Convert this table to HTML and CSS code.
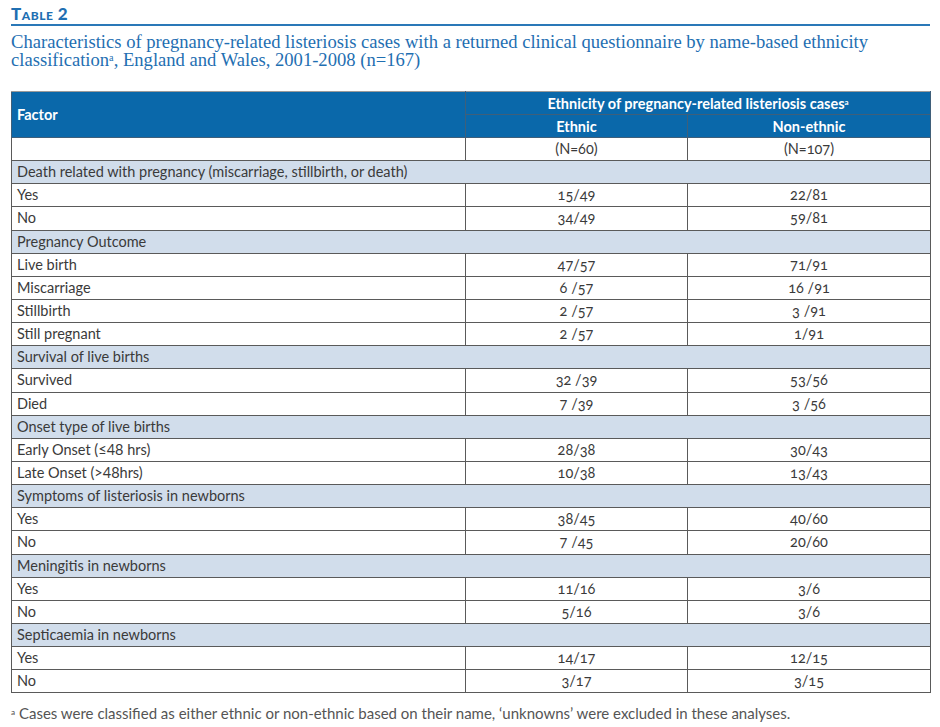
FILE: index.html
```html
<!DOCTYPE html>
<html lang="en">
<head>
<meta charset="utf-8">
<title>Table 2</title>
<link rel="stylesheet" href="styles.css">
</head>
<body>
<div class="page">
  <h1 class="label">Table 2</h1>
  <p class="caption">Characteristics of pregnancy-related listeriosis cases with a returned clinical questionnaire by name-based ethnicity classification<sup>a</sup>, England and Wales, 2001-2008 (n=167)</p>
  <table class="data">
    <colgroup>
      <col class="c1"><col class="c2"><col class="c3">
    </colgroup>
    <thead>
      <tr>
        <th rowspan="2" class="left">Factor</th>
        <th colspan="2">Ethnicity of pregnancy-related listeriosis cases<sup>a</sup></th>
      </tr>
      <tr>
        <th>Ethnic</th>
        <th>Non-ethnic</th>
      </tr>
    </thead>
    <tbody>
      <tr><td></td><td class="n">(N=60)</td><td class="n">(N=107)</td></tr>
      <tr class="sec"><td colspan="3">Death related with pregnancy (miscarriage, stillbirth, or death)</td></tr>
      <tr><td>Yes</td><td class="n">15/49</td><td class="n">22/81</td></tr>
      <tr><td>No</td><td class="n">34/49</td><td class="n">59/81</td></tr>
      <tr class="sec"><td colspan="3">Pregnancy Outcome</td></tr>
      <tr><td>Live birth</td><td class="n">47/57</td><td class="n">71/91</td></tr>
      <tr><td>Miscarriage</td><td class="n">6 /57</td><td class="n">16 /91</td></tr>
      <tr><td>Stillbirth</td><td class="n">2 /57</td><td class="n">3 /91</td></tr>
      <tr><td>Still pregnant</td><td class="n">2 /57</td><td class="n">1/91</td></tr>
      <tr class="sec"><td colspan="3">Survival of live births</td></tr>
      <tr><td>Survived</td><td class="n">32 /39</td><td class="n">53/56</td></tr>
      <tr><td>Died</td><td class="n">7 /39</td><td class="n">3 /56</td></tr>
      <tr class="sec"><td colspan="3">Onset type of live births</td></tr>
      <tr><td>Early Onset (≤48 hrs)</td><td class="n">28/38</td><td class="n">30/43</td></tr>
      <tr><td>Late Onset (&gt;48hrs)</td><td class="n">10/38</td><td class="n">13/43</td></tr>
      <tr class="sec"><td colspan="3">Symptoms of listeriosis in newborns</td></tr>
      <tr><td>Yes</td><td class="n">38/45</td><td class="n">40/60</td></tr>
      <tr><td>No</td><td class="n">7 /45</td><td class="n">20/60</td></tr>
      <tr class="sec"><td colspan="3">Meningitis in newborns</td></tr>
      <tr><td>Yes</td><td class="n">11/16</td><td class="n">3/6</td></tr>
      <tr><td>No</td><td class="n">5/16</td><td class="n">3/6</td></tr>
      <tr class="sec"><td colspan="3">Septicaemia in newborns</td></tr>
      <tr><td>Yes</td><td class="n">14/17</td><td class="n">12/15</td></tr>
      <tr><td>No</td><td class="n">3/17</td><td class="n">3/15</td></tr>
    </tbody>
  </table>
  <p class="note"><sup>a</sup> Cases were classified as either ethnic or non-ethnic based on their name, ‘unknowns’ were excluded in these analyses.</p>
</div>
</body>
</html>
```
FILE: styles.css
```css
html, body {
  margin: 0;
  padding: 0;
  background: #ffffff;
}
.page {
  padding: 6px 10px 0 11px;
  width: 919px;
}
.label {
  margin: 0;
  font-family: Lato, "Open Sans", sans-serif;
  font-weight: 900;
  font-size: 17px;
  font-variant: small-caps;
  letter-spacing: 0.5px;
  line-height: 16px;
  color: #1f6fb2;
  padding-bottom: 2px;
  border-bottom: 2px solid #2a78b8;
}
.caption {
  margin: 7px 0 0 0;
  font-family: "Liberation Serif", serif;
  font-size: 18.6px;
  line-height: 18px;
  color: #1f6fb2;
}
.caption sup, .data sup, .note sup {
  font-size: 0.55em;
  line-height: 0;
  vertical-align: 0.5em;
}
.data {
  margin-top: 22px;
  width: 919px;
  border-collapse: collapse;
  table-layout: fixed;
  font-family: Lato, "Open Sans", sans-serif;
  font-size: 14.5px;
  color: #3a3a3a;
}
.c1 { width: 454px; }
.c2 { width: 222px; }
.c3 { width: 243px; }
.data th {
  background: #0a68aa;
  color: #ffffff;
  font-weight: 700;
  height: 22px;
  padding: 0 5px;
  text-align: center;
  border: 1px solid #3f5f7a;
}
.data thead tr:first-child th {
  border-top-color: #9a9a9a;
}
.data th.left {
  text-align: left;
}
.data td {
  height: 22.15px;
  padding: 0 5px;
  border: 1px solid #5a5a5a;
  line-height: 16px;
  vertical-align: middle;
}
.data td.n {
  text-align: center;
  font-variant-numeric: oldstyle-nums;
}
.data tr.sec td {
  background: #d1ddeb;
}
.note {
  margin: 11px 0 0 0;
  font-family: Lato, "Open Sans", sans-serif;
  font-size: 15px;
  color: #555555;
}
```
